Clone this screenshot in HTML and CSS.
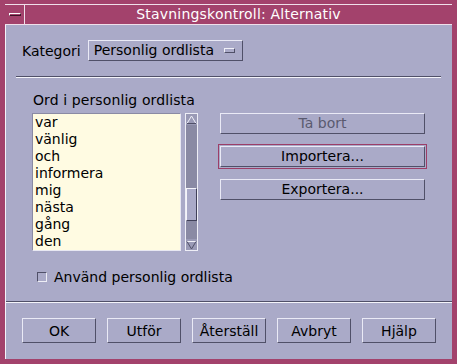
FILE: index.html
```html
<html lang="sv">
<head>
    <meta charset="UTF-8">
    <title>Stavningskontroll: Alternativ</title>
    <link rel="stylesheet" href="styles.css">
</head>
<body>
    <div class="window">
        <div class="titlebar">
            <div class="menu-btn"><span class="menu-glyph"></span></div>
            <div class="title">Stavningskontroll: Alternativ</div>
        </div>
        <div class="client">
            <div class="category-row">
                <span class="label">Kategori</span>
                <div class="option-menu">Personlig ordlista <span class="option-glyph"></span></div>
            </div>
            <div class="sep sep-inset"></div>
            <div class="main-row">
                <div class="list-group">
                    <div class="list-label">Ord i personlig ordlista</div>
                    <div class="list-wrap">
                        <ul class="list">
                            <li>var</li>
                            <li>vänlig</li>
                            <li>och</li>
                            <li>informera</li>
                            <li>mig</li>
                            <li>nästa</li>
                            <li>gång</li>
                            <li>den</li>
                        </ul>
                        <div class="scrollbar">
                            <div class="arrow arrow-up"><svg width="11" height="10" viewBox="0 0 11 10"><path d="M1 8.5 L5.5 1 L10 8.5" fill="none" stroke="#f0f0f8" stroke-width="1"/><path d="M1 8.5 H10" stroke="#505068" stroke-width="1"/></svg></div>
                            <div class="trough">
                                <div class="thumb"></div>
                            </div>
                            <div class="arrow arrow-down"><svg width="11" height="10" viewBox="0 0 11 10"><path d="M1 1.5 H10" stroke="#f0f0f8" stroke-width="1"/><path d="M1 1.5 L5.5 9 L10 1.5" fill="none" stroke="#505068" stroke-width="1"/></svg></div>
                        </div>
                    </div>
                </div>
                <div class="side-buttons">
                    <button class="btn wide" disabled>Ta bort</button>
                    <button class="btn wide default">Importera...</button>
                    <button class="btn wide">Exportera...</button>
                </div>
            </div>
            <div class="check-row">
                <span class="checkbox"></span>
                <span>Använd personlig ordlista</span>
            </div>
            <div class="sep"></div>
            <div class="bottom-buttons">
                <button class="btn action">OK</button>
                <button class="btn action">Utför</button>
                <button class="btn action">Återställ</button>
                <button class="btn action">Avbryt</button>
                <button class="btn action">Hjälp</button>
            </div>
        </div>
    </div>
</body>
</html>
```

FILE: styles.css
```css
body { margin: 0; padding: 0; font-family: "DejaVu Sans", sans-serif; font-size: 14px; color: #000; background: #a3426c; }
.window { width: 457px; height: 364px; box-sizing: border-box; border: 5px solid #a3426c; border-top-width: 4px; box-shadow: inset 0 0 0 1px #d07898; display: flex; flex-direction: column; overflow: hidden; }
.titlebar { height: 20px; display: flex; background: #a3426c; border-bottom: 1px solid #f0e0ea; margin-left: -1px; margin-right: -1px; }
.menu-btn { width: 19px; border-left: 1px solid #f0e0ea; border-right: 1px solid #f0e0ea; border-top: 1px solid #f0e0ea; display: flex; align-items: center; justify-content: center; }
.menu-glyph { width: 10px; height: 1px; border-top: 1px solid #fff; border-bottom: 1px solid #3c1426; border-left: 1px solid #fff; border-right: 1px solid #3c1426; }
.title { flex: 1; text-align: center; color: #fff; border-top: 1px solid #f0e0ea; border-right: 1px solid #f0e0ea; line-height: 19px; letter-spacing: 0.2px; }

.client { flex: 1; background: #aaaac8; display: flex; flex-direction: column; border-left: 1px solid #f4f4fa; }
.category-row { display: flex; align-items: center; margin-top: 15px; padding-left: 16px; height: 21px; gap: 7px; }
.option-menu { width: 148px; height: 19px; line-height: 19px; padding-left: 5px; border: 1px solid; border-color: #eaeaf6 #505068 #505068 #eaeaf6; display: flex; align-items: center; gap: 10px; white-space: nowrap; }
.option-glyph { width: 9px; height: 3px; border: 1px solid; border-color: #f0f0f8 #505068 #505068 #f0f0f8; }

.sep { height: 1px; background: #505068; border-bottom: 1px solid #f4f4fa; }
.sep-inset { margin: 15px 11px 0 10px; }

.main-row { display: flex; margin-top: 14px; padding-left: 26px; }
.list-label { line-height: 17px; height: 17px; margin-bottom: 4px; padding-left: 1px; letter-spacing: 0.1px; }
.list-wrap { display: flex; gap: 4px; }
.list { margin: 0; padding: 0 0 0 2px; list-style: none; width: 145px; height: 136px; background: #fffbe2; border: 1px solid; border-color: #8a8aa4 #e8e8f2 #e8e8f2 #8a8aa4; overflow: hidden; }
.list li { line-height: 17px; }
.scrollbar { width: 13px; height: 138px; box-sizing: border-box; border: 1px solid #eeeef6; background: #8a8aa4; display: flex; flex-direction: column; }
.arrow { height: 11px; display: flex; align-items: center; justify-content: center; background: #9a9ab6; }
.arrow svg { display: block; }
.trough { flex: 1; position: relative; }
.thumb { position: absolute; left: 0; right: 0; top: 63px; height: 33px; background: #aaaac8; border: 1px solid; border-color: #f4f4fa #404058 #404058 #f4f4fa; box-sizing: border-box; }

.side-buttons { display: flex; flex-direction: column; gap: 12px; padding-top: 21px; margin-left: 22px; }
.btn { font-family: "DejaVu Sans", sans-serif; font-size: 14px; color: #000; background: #aaaac8; border: 1px solid; border-color: #eaeaf6 #505068 #505068 #eaeaf6; padding: 0; margin: 0; border-radius: 0; }
.wide { width: 205px; height: 21px; line-height: 19px; }
.default { outline: 1px solid #9c3e68; outline-offset: 1px; }
.btn:disabled { color: #5a5a70; }

.check-row { display: flex; align-items: center; gap: 7px; height: 17px; margin-top: 17px; padding-left: 31px; }
.check-row + .sep { margin-top: 16px; }
.checkbox { width: 8px; height: 8px; border: 1px solid; border-color: #505068 #eeeef6 #eeeef6 #505068; }

.bottom-buttons { display: flex; gap: 11px; margin-top: 15px; padding-left: 16px; }
.action { width: 74px; height: 25px; }
```
